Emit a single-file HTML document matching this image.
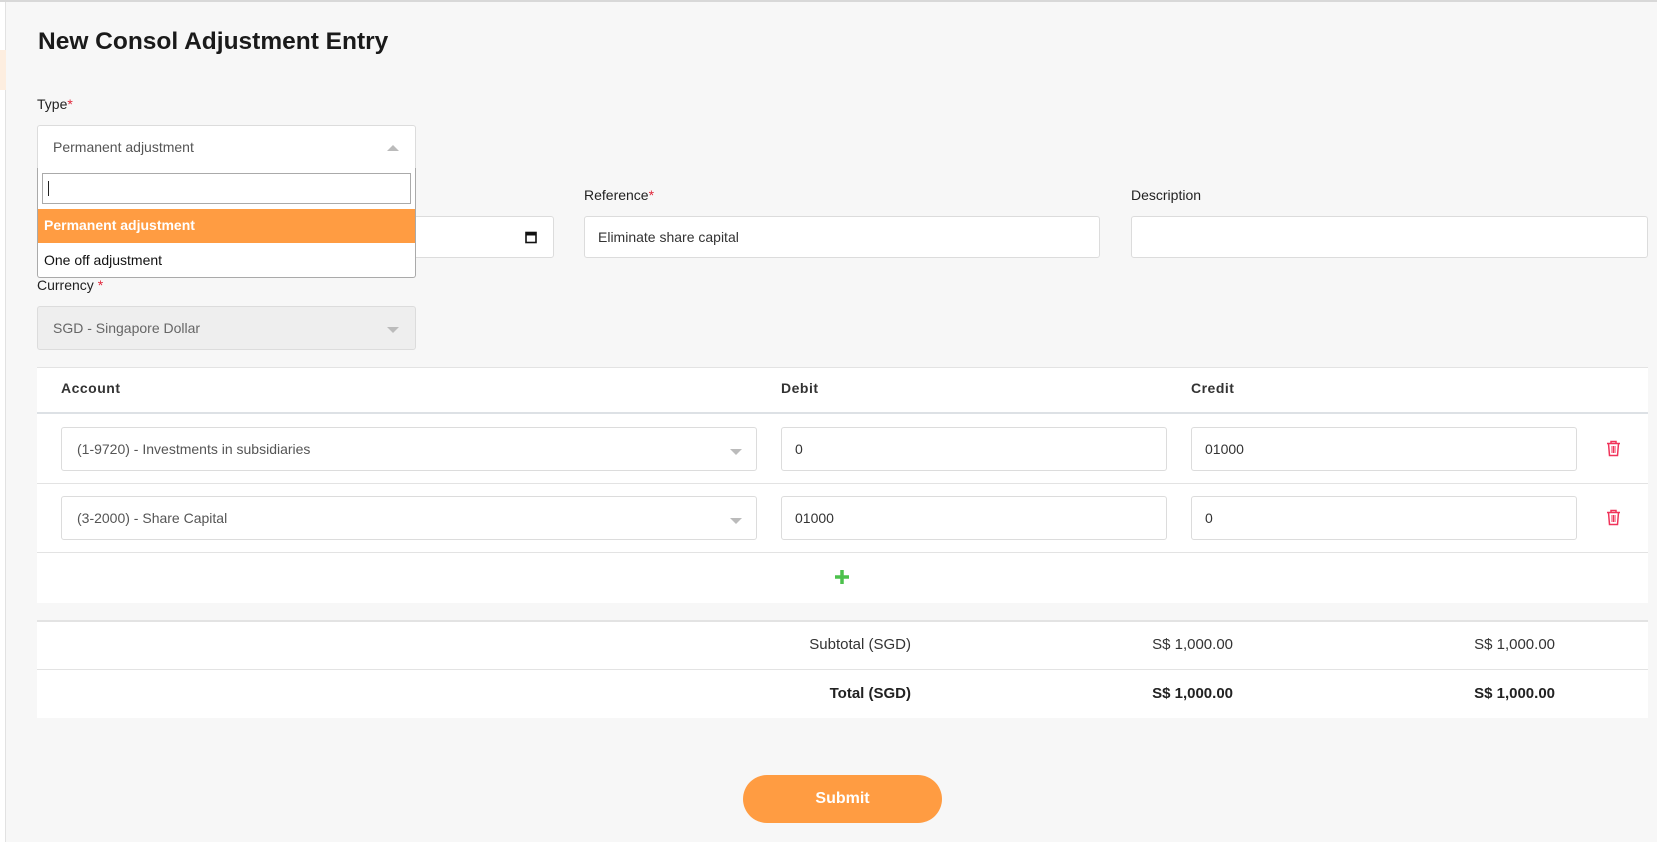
<!DOCTYPE html>
<html><head><style>
*{box-sizing:border-box;margin:0;padding:0}
body{width:1657px;height:842px;background:#f7f7f7;font-family:"Liberation Sans",sans-serif;color:#222;position:relative;overflow:hidden}
.a{position:absolute}
.inp{position:absolute;background:#fff;border:1px solid #dcdcdc;border-radius:3px;font-size:14px;color:#333;padding-left:13px;display:flex;align-items:center}
.lbl{position:absolute;font-size:14px;color:#222}
.req{color:#e0263a}
.caret{position:absolute;width:0;height:0;border-left:6px solid transparent;border-right:6px solid transparent}
.trash{position:absolute}
</style></head><body>
<div class="a" style="left:0;top:0;width:6px;height:842px;background:#fff;border-right:1px solid #e2e2e2"></div>
<div class="a" style="left:0;top:50px;width:6px;height:40px;background:#fdeee0"></div>
<div class="a" style="left:0;top:0;width:1657px;height:2px;background:#d8d8d8"></div>

<div class="a" style="left:38px;top:28px;font-size:24.5px;font-weight:bold;color:#1a1a1a">New Consol Adjustment Entry</div>

<div class="lbl" style="left:37px;top:96px">Type<span class="req">*</span></div>

<div class="lbl" style="left:584px;top:187px">Reference<span class="req">*</span></div>
<div class="lbl" style="left:1131px;top:187px">Description</div>
<div class="inp" style="left:380px;top:216px;width:174px;height:42px"><svg class="a" style="left:144px;top:14px" width="12" height="13" viewBox="0 0 12 13"><rect x="1" y="1.5" width="10" height="10" fill="none" stroke="#111" stroke-width="1.6"/><rect x="1" y="1.5" width="10" height="3" fill="#111"/></svg></div>
<div class="inp" style="left:584px;top:216px;width:516px;height:42px">Eliminate share capital</div>
<div class="inp" style="left:1131px;top:216px;width:517px;height:42px"></div>

<div class="inp" style="left:37px;top:125px;width:379px;height:44px;color:#555;border-radius:3px 3px 0 0;padding-left:15px">Permanent adjustment<div class="caret" style="left:349px;top:19px;border-bottom:6px solid #bbb"></div></div>
<div class="a" style="left:37px;top:168px;width:379px;height:110px;background:#fff;border:1px solid #aaa;border-top:none;border-radius:0 0 3px 3px">
 <div class="a" style="left:4px;top:5px;width:369px;height:31px;border:1px solid #aaa"><div class="a" style="left:5px;top:7px;width:1px;height:15px;background:#222"></div></div>
 <div class="a" style="left:0;top:41px;width:377px;height:34px;background:#ff9c42;color:#fff;font-size:14px;font-weight:bold;padding:8px 6px">Permanent adjustment</div>
 <div class="a" style="left:0;top:75px;width:377px;height:34px;color:#111;font-size:14px;padding:9px 6px">One off adjustment</div>
</div>

<div class="lbl" style="left:37px;top:277px">Currency <span class="req">*</span></div>
<div class="inp" style="left:37px;top:306px;width:379px;height:44px;background:#eee;color:#666;padding-left:15px">SGD - Singapore Dollar<div class="caret" style="left:349px;top:20px;border-top:6px solid #bbb"></div></div>

<div class="a" style="left:37px;top:367px;width:1611px;height:236px;background:#fff;border-top:1px solid #e3e3e3"></div>
<div class="a" style="left:37px;top:412px;width:1611px;height:2px;background:#dde1e5"></div>
<div class="a" style="left:61px;top:380px;font-size:14px;font-weight:bold;letter-spacing:.5px;color:#333">Account</div>
<div class="a" style="left:781px;top:380px;font-size:14px;font-weight:bold;letter-spacing:.5px;color:#333">Debit</div>
<div class="a" style="left:1191px;top:380px;font-size:14px;font-weight:bold;letter-spacing:.5px;color:#333">Credit</div>

<div class="inp" style="left:61px;top:427px;width:696px;height:44px;color:#555;padding-left:15px">(1-9720) - Investments in subsidiaries<div class="caret" style="left:668px;top:21px;border-top:6px solid #bbb"></div></div>
<div class="inp" style="left:781px;top:427px;width:386px;height:44px">0</div>
<div class="inp" style="left:1191px;top:427px;width:386px;height:44px">01000</div>
<div class="a" style="left:37px;top:483px;width:1611px;height:1px;background:#e3e3e3"></div>
<div class="inp" style="left:61px;top:496px;width:696px;height:44px;color:#555;padding-left:15px">(3-2000) - Share Capital<div class="caret" style="left:668px;top:21px;border-top:6px solid #bbb"></div></div>
<div class="inp" style="left:781px;top:496px;width:386px;height:44px">01000</div>
<div class="inp" style="left:1191px;top:496px;width:386px;height:44px">0</div>
<div class="a" style="left:37px;top:552px;width:1611px;height:1px;background:#e3e3e3"></div>

<svg class="trash" style="left:1606px;top:440px" width="15" height="17" viewBox="0 0 15 17"><g fill="none" stroke="#f0335a" stroke-width="1.5"><path d="M1 3.5h13M5 3.5V1.5h5v2M2.5 3.5l1 12h8l1-12"/><path d="M6 6v7M7.5 6v7M9 6v7" stroke-width="1"/></g></svg>
<svg class="trash" style="left:1606px;top:509px" width="15" height="17" viewBox="0 0 15 17"><g fill="none" stroke="#f0335a" stroke-width="1.5"><path d="M1 3.5h13M5 3.5V1.5h5v2M2.5 3.5l1 12h8l1-12"/><path d="M6 6v7M7.5 6v7M9 6v7" stroke-width="1"/></g></svg>

<svg class="a" style="left:835px;top:570px" width="14" height="14" viewBox="0 0 14 14"><path d="M7 0v14M0 7h14" stroke="#4cc14c" stroke-width="3.5"/></svg>

<div class="a" style="left:37px;top:620px;width:1611px;height:98px;background:#fff;border-top:2px solid #e3e3e3"></div>
<div class="a" style="left:37px;top:669px;width:1611px;height:1px;background:#e3e3e3"></div>
<div class="a" style="left:700px;top:636px;width:211px;text-align:right;font-size:15px;color:#333">Subtotal (SGD)</div>
<div class="a" style="left:1033px;top:636px;width:200px;text-align:right;font-size:15px;color:#333">S$ 1,000.00</div>
<div class="a" style="left:1355px;top:636px;width:200px;text-align:right;font-size:15px;color:#333">S$ 1,000.00</div>
<div class="a" style="left:700px;top:685px;width:211px;text-align:right;font-size:15px;font-weight:bold;color:#222">Total (SGD)</div>
<div class="a" style="left:1033px;top:685px;width:200px;text-align:right;font-size:15px;font-weight:bold;color:#222">S$ 1,000.00</div>
<div class="a" style="left:1355px;top:685px;width:200px;text-align:right;font-size:15px;font-weight:bold;color:#222">S$ 1,000.00</div>

<div class="a" style="left:743px;top:775px;width:199px;height:48px;border-radius:24px;background:#ff9c42;color:#fff;font-weight:bold;font-size:16px;display:flex;align-items:center;justify-content:center">Submit</div>
</body></html>
